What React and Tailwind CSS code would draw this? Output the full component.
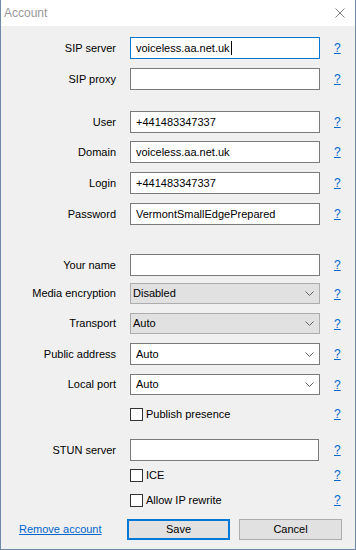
const font = { fontFamily: '"Liberation Sans", Arial, sans-serif' };

function Help() {
  return (
    <a className="ml-[14px] text-[#0066cc] underline text-[12px] leading-none cursor-pointer">?</a>
  );
}

function Row({ label, top, h = "h-[22px]", children }) {
  return (
    <div className={`flex items-center ${h} ${top}`}>
      <div className="w-[115px] text-right text-[11px] text-black whitespace-nowrap">{label}</div>
      <div className="ml-[14px] w-[190px] h-full">{children}</div>
      <Help />
    </div>
  );
}

function Input({ value, focused }) {
  return (
    <div
      className={`h-full bg-white border flex items-center px-[5px] text-[11px] text-black ${
        focused ? "border-[#0078d7]" : "border-[#7a7a7a]"
      }`}
    >
      {value}
      {focused && <span className="w-px h-[14px] bg-black ml-px"></span>}
    </div>
  );
}

function Select({ value, disabled }) {
  return (
    <div
      className={`h-full border flex items-center justify-between text-[11px] text-black ${
        disabled ? "bg-[#e1e1e1] border-[#adadad] pl-[2px]" : "bg-white border-[#7a7a7a] pl-[5px]"
      } pr-[5px]`}
    >
      <span>{value}</span>
      <svg width="9" height="5" viewBox="0 0 9 5" className="text-[#606060]">
        <path d="M0.5 0.5 L4.5 4.5 L8.5 0.5" fill="none" stroke="currentColor" strokeWidth="1" />
      </svg>
    </div>
  );
}

function Check({ label, top }) {
  return (
    <div className={`flex items-center h-[14px] ${top}`}>
      <div className="w-[115px]"></div>
      <div className="ml-[14px] w-[190px] flex items-center">
        <span className="w-[13px] h-[13px] border border-[#333] bg-white"></span>
        <span className="ml-[3px] text-[11px] text-black">{label}</span>
      </div>
      <Help />
    </div>
  );
}

export default function App() {
  return (
    <div className="w-[356px] h-[550px] bg-[#f0f0f0] border-x border-b border-[#6d8aa8] flex flex-col" style={font}>
      <div className="h-[26px] bg-white flex items-center justify-between pl-[3px] pr-[10px]">
        <span className="text-[12px] text-[#999999]">Account</span>
        <svg width="10" height="10" viewBox="0 0 10 10" className="text-[#808080]">
          <path d="M0.5 0.5 L9.5 9.5 M9.5 0.5 L0.5 9.5" stroke="currentColor" strokeWidth="1" />
        </svg>
      </div>

      <Row label="SIP server" top="mt-[11px]">
        <Input value="voiceless.aa.net.uk" focused />
      </Row>
      <Row label="SIP proxy" top="mt-[9px]">
        <Input value="" />
      </Row>

      <Row label="User" top="mt-[21px]">
        <Input value="+441483347337" />
      </Row>
      <Row label="Domain" top="mt-[8px]">
        <Input value="voiceless.aa.net.uk" />
      </Row>
      <Row label="Login" top="mt-[9px]">
        <Input value="+441483347337" />
      </Row>
      <Row label="Password" top="mt-[9px]">
        <Input value="VermontSmallEdgePrepared" />
      </Row>

      <Row label="Your name" top="mt-[29px]">
        <Input value="" />
      </Row>
      <Row label="Media encryption" top="mt-[7px]" h="h-[21px]">
        <Select value="Disabled" disabled />
      </Row>
      <Row label="Transport" top="mt-[9px]" h="h-[21px]">
        <Select value="Auto" disabled />
      </Row>
      <Row label="Public address" top="mt-[9px]" h="h-[22px]">
        <Select value="Auto" />
      </Row>
      <Row label="Local port" top="mt-[9px]" h="h-[21px]">
        <Select value="Auto" />
      </Row>
      <Check label="Publish presence" top="mt-[12px]" />

      <Row label="STUN server" top="mt-[18px]">
        <div className="w-[189px] h-full">
          <Input value="" />
        </div>
      </Row>
      <Check label="ICE" top="mt-[7px]" />
      <Check label="Allow IP rewrite" top="mt-[11px]" />

      <div className="flex items-center mt-[12px] h-[21px]">
        <a className="ml-[18px] w-[108px] text-[11px] text-[#0066cc] underline cursor-pointer">Remove account</a>
        <button className="w-[103px] h-full bg-[#e1e1e1] border-2 border-[#0078d7] text-[11px] text-black">
          Save
        </button>
        <button className="ml-[9px] w-[103px] h-full bg-[#e1e1e1] border border-[#adadad] text-[11px] text-black">
          Cancel
        </button>
      </div>
    </div>
  );
}
